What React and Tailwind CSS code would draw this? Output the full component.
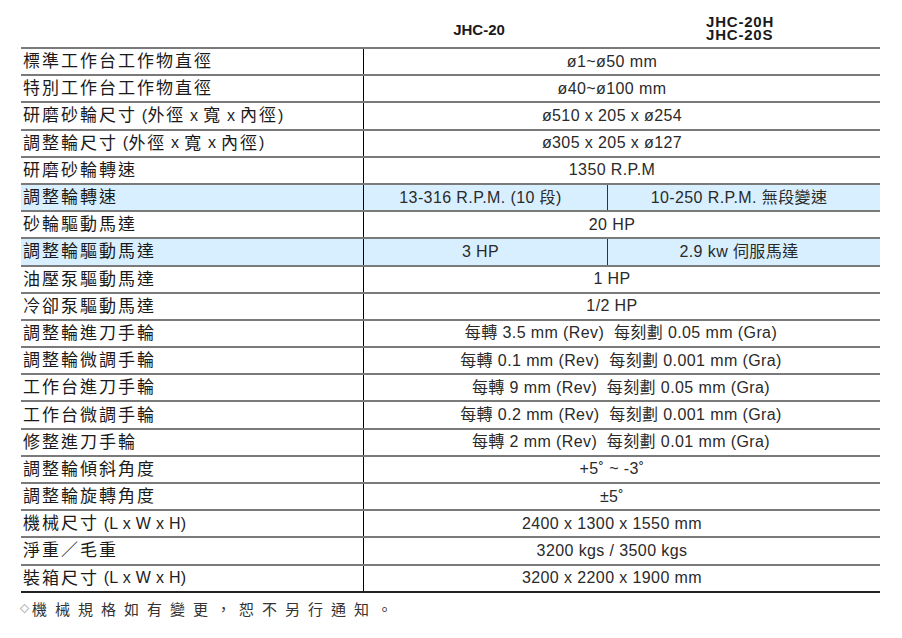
import React from "react";

const rows = [
  { label: "標準工作台工作物直徑", value: "ø1~ø50 mm" },
  { label: "特別工作台工作物直徑", value: "ø40~ø100 mm" },
  { label: "研磨砂輪尺寸 (外徑 x 寬 x 內徑)", value: "ø510 x 205 x ø254" },
  { label: "調整輪尺寸 (外徑 x 寬 x 內徑)", value: "ø305 x 205 x ø127" },
  { label: "研磨砂輪轉速", value: "1350 R.P.M" },
  { label: "調整輪轉速", split: ["13-316 R.P.M. (10 段)", "10-250 R.P.M. 無段變速"], blue: true },
  { label: "砂輪驅動馬達", value: "20 HP" },
  { label: "調整輪驅動馬達", split: ["3 HP", "2.9 kw 伺服馬達"], blue: true },
  { label: "油壓泵驅動馬達", value: "1 HP" },
  { label: "冷卻泵驅動馬達", value: "1/2 HP" },
  { label: "調整輪進刀手輪", value: "每轉 3.5 mm (Rev)  每刻劃 0.05 mm (Gra)", long: true },
  { label: "調整輪微調手輪", value: "每轉 0.1 mm (Rev)  每刻劃 0.001 mm (Gra)", long: true },
  { label: "工作台進刀手輪", value: "每轉 9 mm (Rev)  每刻劃 0.05 mm (Gra)", long: true },
  { label: "工作台微調手輪", value: "每轉 0.2 mm (Rev)  每刻劃 0.001 mm (Gra)", long: true },
  { label: "修整進刀手輪", value: "每轉 2 mm (Rev)  每刻劃 0.01 mm (Gra)", long: true },
  { label: "調整輪傾斜角度", value: "+5˚ ~ -3˚" },
  { label: "調整輪旋轉角度", value: "±5˚" },
  { label: "機械尺寸 (L x W x H)", value: "2400 x 1300 x 1550 mm" },
  { label: "淨重／毛重", value: "3200 kgs / 3500 kgs" },
  { label: "裝箱尺寸 (L x W x H)", value: "3200 x 2200 x 1900 mm" },
];

// spacing only on the chinese characters, latin parts stay tight
function Label({ text }) {
  const parts = text.split(/([\u3000-\u9fff\uff00-\uffef]+)/).filter(Boolean);
  return parts.map((p, i) =>
    /[\u3000-\u9fff\uff00-\uffef]/.test(p) ? (
      <span key={i} className="tracking-[2px]">{p}</span>
    ) : (
      <span key={i} className="text-[16px] tracking-[0.3px] text-[#222]">{p}</span>
    )
  );
}

export default function App() {
  return (
    <div
      className="w-[902px] h-[638px] bg-white text-[#1a1a1a] overflow-hidden"
      style={{ fontFamily: '"Liberation Sans", "Noto Sans CJK TC", sans-serif' }}
    >
      <div className="ml-[21px] w-[859px]">
        {/* Header */}
        <div className="flex h-[47px] items-end">
          <div className="w-[343px]" />
          <div className="w-[244px] text-center font-bold text-[15px] leading-[15px] pb-[10px] pr-[14px]">JHC-20</div>
          <div className="flex-1 font-bold text-[15px] leading-[13px] tracking-[0.8px] pl-[98px] pb-[6px]">
            <div>JHC-20H</div>
            <div>JHC-20S</div>
          </div>
        </div>

        {/* Table */}
        <div className="border-b-2 border-[#222]">
          {rows.map((r, i) => (
            <div
              key={i}
              className={`flex h-[27.2px] border-t-2 border-[#7a7a7a] ${r.blue ? "bg-[#d8efff]" : ""}`}
            >
              <div className="w-[343px] shrink-0 border-r border-black pl-[2px] flex items-center text-[17px] leading-none whitespace-pre">
                <Label text={r.label} />
              </div>
              {r.split ? (
                <div className="flex flex-1 text-[#2a2a2a]">
                  <div className="w-[244px] border-r border-[#333] flex items-center justify-center text-[16px] tracking-[0.4px] pr-[10px] whitespace-nowrap">
                    {r.split[0]}
                  </div>
                  <div className="flex-1 flex items-center justify-center text-[16px] tracking-[0.4px] pr-[10px] whitespace-nowrap">
                    {r.split[1]}
                  </div>
                </div>
              ) : (
                <div
                  className={`flex-1 flex items-center justify-center text-[16px] tracking-[0.4px] text-[#2a2a2a] whitespace-pre ${r.long ? "pr-[2px]" : "pr-[20px]"}`}
                >
                  {r.value}
                </div>
              )}
            </div>
          ))}
        </div>
      </div>

      {/* Footnote */}
      <div className="ml-[20px] mt-[6px] flex items-center text-[15px] tracking-[8px] text-[#333]">
        <span className="text-[9px] tracking-[3px]">◇</span>
        <span>機械規格如有變更，恕不另行通知。</span>
      </div>
    </div>
  );
}
